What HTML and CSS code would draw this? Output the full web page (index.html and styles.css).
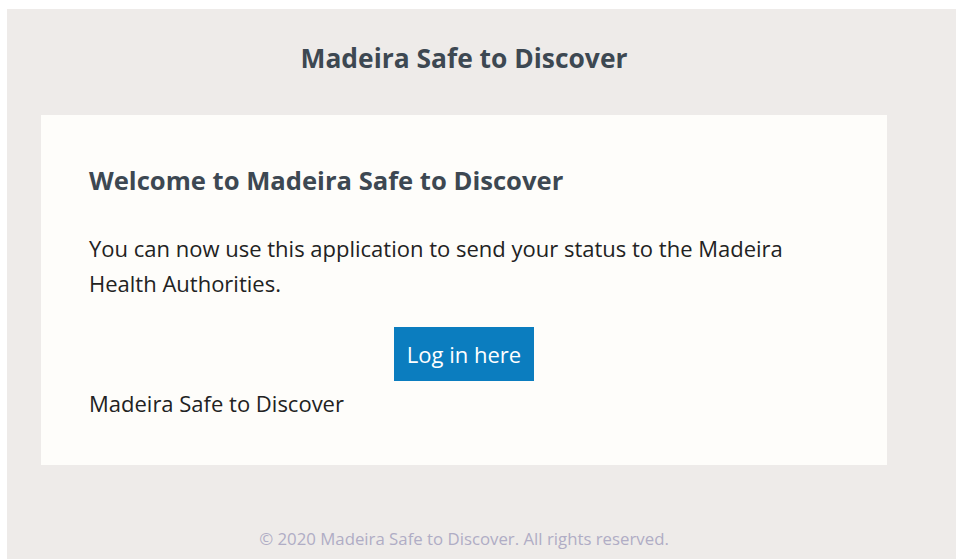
FILE: index.html
```html
<!DOCTYPE html>
<html lang="en">
<head>
<meta charset="utf-8">
<title>Madeira Safe to Discover</title>
<link rel="stylesheet" href="styles.css">
</head>
<body>
<div class="wrapper">
  <div class="content">
    <header class="header">
      <a class="brand" href="#">Madeira Safe to Discover</a>
    </header>
    <main class="card">
      <h1 class="card-title">Welcome to Madeira Safe to Discover</h1>
      <p class="card-text">You can now use this application to send your status to the Madeira Health Authorities.</p>
      <div class="action">
        <a class="button" href="#">Log in here</a>
      </div>
      <p class="signature">Madeira Safe to Discover</p>
    </main>
    <footer class="footer">
      <p>© 2020 Madeira Safe to Discover. All rights reserved.</p>
    </footer>
  </div>
</div>
</body>
</html>
```

FILE: styles.css
```css
html, body {
  margin: 0;
  padding: 0;
  background: #ffffff;
}

body {
  font-family: "Open Sans", "Noto Sans", sans-serif;
  color: #222222;
  overflow: hidden;
}

.wrapper {
  margin: 9px 0 0 7px;
  background: #eeebe9;
  height: 560px;
}

.content {
  width: 914px;
  display: flex;
  flex-direction: column;
  align-items: center;
}

.header {
  box-sizing: border-box;
  height: 106px;
  display: flex;
  align-items: center;
  justify-content: center;
  padding-bottom: 8px;
}

.brand {
  color: #3d4852;
  font-size: 26.4px;
  font-weight: 700;
  text-decoration: none;
}

.card {
  box-sizing: border-box;
  width: 846px;
  height: 350px;
  background: #fefdfa;
  padding: 51px 48px 0;
}

.card-title {
  margin: 0;
  color: #3d4852;
  font-size: 25.6px;
  font-weight: 700;
  line-height: 30px;
}

.card-text {
  margin: 35px 0 0;
  font-size: 22px;
  line-height: 35px;
}

.action {
  display: flex;
  justify-content: center;
  margin-top: 26px;
}

.button {
  display: inline-flex;
  align-items: center;
  justify-content: center;
  width: 140px;
  height: 54px;
  background: #0b7dbf;
  color: #ffffff;
  font-size: 22px;
  text-decoration: none;
}

.signature {
  margin: 7px 0 0;
  font-size: 22px;
  line-height: 30px;
}

.footer {
  margin-top: 64px;
}

.footer p {
  margin: 0;
  color: #b0adc5;
  font-size: 16.8px;
  line-height: 20px;
}
```
